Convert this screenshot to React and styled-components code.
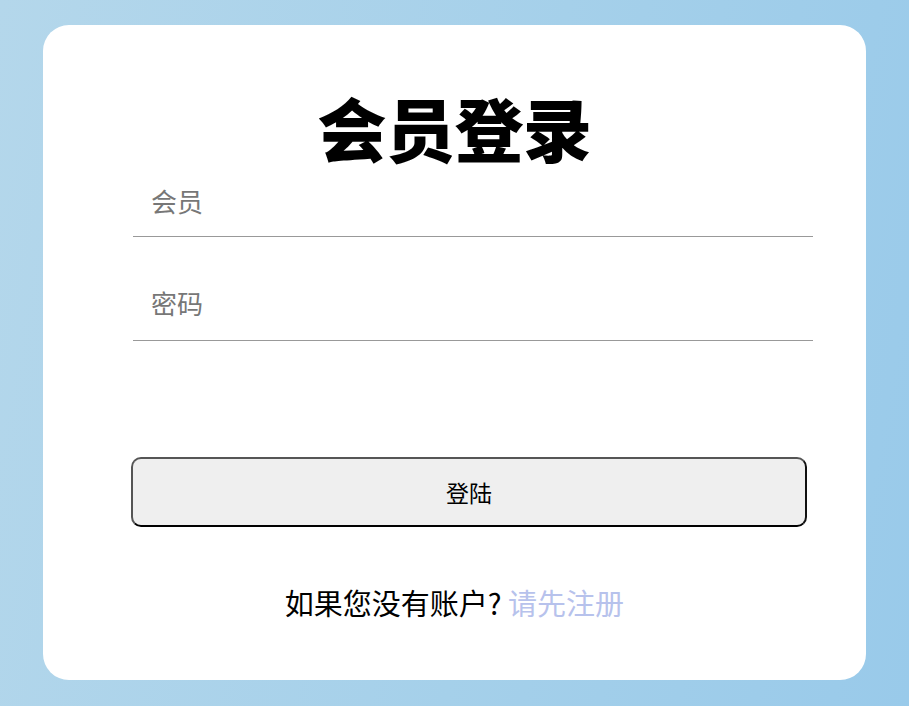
import React from "react";
import styled, { createGlobalStyle } from "styled-components";

const Global = createGlobalStyle`
  html, body { margin: 0; padding: 0; height: 100%; }
  body {
    font-family: "Noto Sans CJK SC", "Noto Sans", sans-serif;
    background: linear-gradient(100deg, #b4d7eb 0%, #a5d0ea 55%, #99caea 100%);
    min-height: 706px;
  }
  #root { padding-top: 25px; }
`;

const Card = styled.div`
  box-sizing: border-box;
  margin-left: 43px;
  width: 823px;
  height: 655px;
  background: #fff;
  border-radius: 26px;
  padding: 66px 0 0 0;
  display: flex;
  flex-direction: column;
`;

const Title = styled.h1`
  margin: 0;
  height: 80px;
  line-height: 73px;
  text-align: center;
  font-size: 69px;
  font-weight: 900;
  color: #000;
  letter-spacing: -0.5px;
`;

const Form = styled.form`
  display: flex;
  flex-direction: column;
  margin: 0;
  padding-left: 88px;
`;

const Field = styled.input`
  box-sizing: border-box;
  width: 680px;
  height: 66px;
  margin: ${(p) => p.$top || 0}px 0 0 2px;
  padding: 0 0 ${(p) => p.$lift || 6}px 18px;
  border: none;
  border-bottom: 1px solid #999;
  outline: none;
  font-family: "Noto Sans CJK SC", sans-serif;
  font-size: 26px;
  color: #222;
  background: transparent;
  &::placeholder { color: #777; }
`;

const Button = styled.button`
  box-sizing: border-box;
  width: 676px;
  height: 70px;
  margin-top: 116px;
  border: 2px solid;
  border-color: #555 #111 #000 #555;
  border-radius: 10px;
  background: #efefef;
  font-family: "Noto Sans CJK SC", sans-serif;
  font-size: 23px;
  color: #000;
  cursor: pointer;
`;

const Footer = styled.p`
  margin: 57px 0 0;
  line-height: 36px;
  text-align: center;
  font-size: 29px;
  color: #000;
`;

const Link = styled.a`
  color: #b7c2ec;
  text-decoration: none;
`;

export default function App() {
  return (
    <>
      <Global />
      <Card>
        <Title>会员登录</Title>
        <Form onSubmit={(e) => e.preventDefault()}>
          <Field type="text" placeholder="会员" />
          <Field type="password" placeholder="密码" $top={38} $lift={10} />
          <Button type="submit">登陆</Button>
        </Form>
        <Footer>
          如果您没有账户? <Link href="#">请先注册</Link>
        </Footer>
      </Card>
    </>
  );
}
